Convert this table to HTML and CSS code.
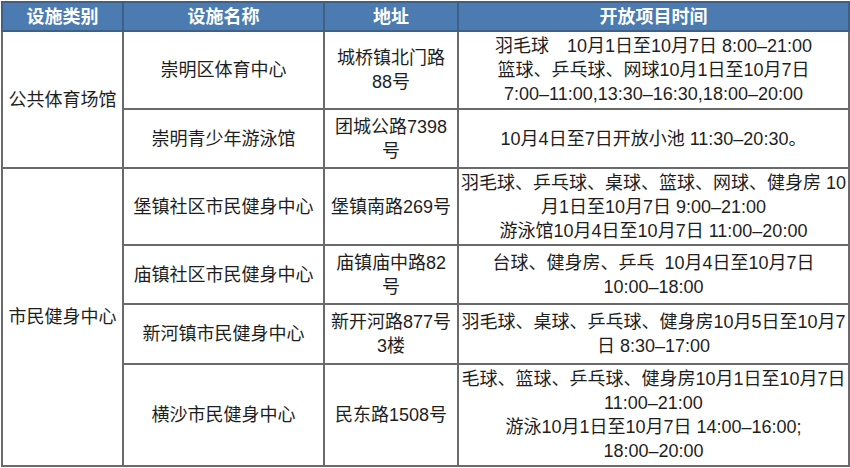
FILE: index.html
```html
<!DOCTYPE html>
<html lang="zh">
<head>
<meta charset="utf-8">
<link rel="stylesheet" href="styles.css">
</head>
<body>
<table class="sched">
  <colgroup>
    <col class="c1"><col class="c2"><col class="c3"><col class="c4">
  </colgroup>
  <thead>
    <tr class="h">
      <th>设施类别</th><th>设施名称</th><th>地址</th><th>开放项目时间</th>
    </tr>
  </thead>
  <tbody>
    <tr class="r1">
      <td rowspan="2">公共体育场馆</td>
      <td>崇明区体育中心</td>
      <td>城桥镇北门路<br>88号</td>
      <td>羽毛球　10月1日至10月7日 8:00–21:00<br>篮球、乒乓球、网球10月1日至10月7日<br>7:00–11:00,13:30–16:30,18:00–20:00</td>
    </tr>
    <tr class="r2">
      <td>崇明青少年游泳馆</td>
      <td>团城公路7398<br>号</td>
      <td>10月4日至7日开放小池 11:30–20:30。</td>
    </tr>
    <tr class="r3">
      <td rowspan="4">市民健身中心</td>
      <td>堡镇社区市民健身中心</td>
      <td>堡镇南路269号</td>
      <td>羽毛球、乒乓球、桌球、篮球、网球、健身房 10<br>月1日至10月7日 9:00–21:00<br>游泳馆10月4日至10月7日 11:00–20:00</td>
    </tr>
    <tr class="r4">
      <td>庙镇社区市民健身中心</td>
      <td>庙镇庙中路82<br>号</td>
      <td>台球、健身房、乒乓&nbsp; 10月4日至10月7日<br>10:00–18:00</td>
    </tr>
    <tr class="r5">
      <td>新河镇市民健身中心</td>
      <td>新开河路877号<br>3楼</td>
      <td>羽毛球、桌球、乒乓球、健身房10月5日至10月7<br>日 8:30–17:00</td>
    </tr>
    <tr class="r6">
      <td>横沙市民健身中心</td>
      <td>民东路1508号</td>
      <td>毛球、篮球、乒乓球、健身房10月1日至10月7日<br>11:00–21:00<br>游泳10月1日至10月7日 14:00–16:00;<br>18:00–20:00</td>
    </tr>
  </tbody>
</table>
</body>
</html>
```

FILE: styles.css
```css
html, body {
  margin: 0;
  padding: 0;
  background: #ffffff;
}
body {
  font-family: "Liberation Sans", "Noto Sans CJK SC", sans-serif;
  color: #1e1e1e;
}
.sched {
  border-collapse: collapse;
  table-layout: fixed;
  width: 847px;
  margin: 1px 0 0 1px;
  font-size: 18px;
  line-height: 24px;
}
.c1 { width: 121px; }
.c2 { width: 201px; }
.c3 { width: 134px; }
.c4 { width: 391px; }
.sched th,
.sched td {
  border: 2px solid #6a6a6a;
  padding: 0;
  text-align: center;
  vertical-align: middle;
  white-space: nowrap;
  overflow: hidden;
}
.sched th {
  background: #4b7bb0;
  color: #ffffff;
  font-weight: bold;
  border-color: #3f5f85;
}
.h { height: 29px; }
.r1 { height: 78px; }
.r2 { height: 59px; }
.r3 { height: 77px; }
.r4 { height: 59px; }
.r5 { height: 60px; }
.r6 { height: 102px; }
```
